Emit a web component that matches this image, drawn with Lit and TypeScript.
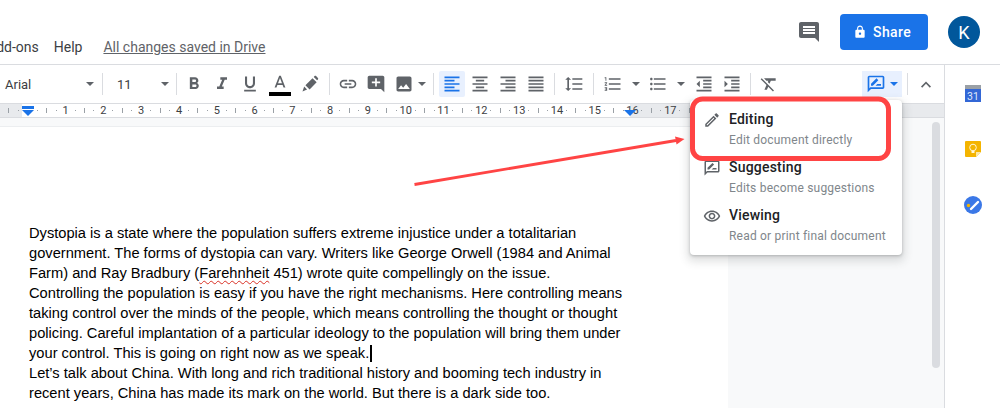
import { LitElement, html, css, svg } from 'lit';
import { customElement } from 'lit/decorators.js';

const ICONS: Record<string, string> = {
    comment: 'M21.99 4c0-1.1-.89-2-1.99-2H4c-1.1 0-2 .9-2 2v12c0 1.1.9 2 2 2h14l4 4-.01-18zM18 14H6v-2h12v2zm0-3H6V9h12v2zm0-3H6V6h12v2z',
    lock: 'M18 8h-1V6c0-2.76-2.24-5-5-5S7 3.24 7 6v2H6c-1.1 0-2 .9-2 2v10c0 1.1.9 2 2 2h12c1.1 0 2-.9 2-2V10c0-1.1-.9-2-2-2zm-6 9c-1.1 0-2-.9-2-2s.9-2 2-2 2 .9 2 2-.9 2-2 2zm3.1-9H8.9V6c0-1.71 1.39-3.1 3.1-3.1 1.71 0 3.1 1.39 3.1 3.1v2z',
    bold: 'M15.6 10.79c.97-.67 1.65-1.77 1.65-2.79 0-2.26-1.75-4-4-4H7v14h7.04c2.09 0 3.71-1.7 3.71-3.79 0-1.52-.86-2.82-2.15-3.42zM10 6.5h3c.83 0 1.5.67 1.5 1.5s-.67 1.5-1.5 1.5h-3v-3zm3.5 9H10v-3h3.5c.83 0 1.5.67 1.5 1.5s-.67 1.5-1.5 1.5z',
    italic: 'M10 4v3h2.21l-3.42 8H6v3h8v-3h-2.21l3.42-8H18V4z',
    underline: 'M12 17c3.31 0 6-2.69 6-6V3h-2.5v8c0 1.93-1.57 3.5-3.5 3.5S8.5 12.93 8.5 11V3H6v8c0 3.31 2.69 6 6 6zm-7 2v2h14v-2H5z',
    textColor: 'M11 1L5.5 15h2.25l1.12-3h6.25l1.12 3h2.25L13 1h-2zm-1.38 9L12 3.67 14.38 10H9.62z',
    marker: 'M3 21l2-6 3.5 3.5L3 21zM6.5 13.5L15 5l5 5-8.5 8.5-5-5zM16.5 3.5l1-1c.5-.5 1.3-.5 1.8 0l2.2 2.2c.5.5.5 1.3 0 1.8l-1 1-4-4z',
    link: 'M3.9 12c0-1.71 1.39-3.1 3.1-3.1h4V7H7c-2.76 0-5 2.24-5 5s2.24 5 5 5h4v-1.9H7c-1.71 0-3.1-1.39-3.1-3.1zM8 13h8v-2H8v2zm9-6h-4v1.9h4c1.71 0 3.1 1.39 3.1 3.1s-1.39 3.1-3.1 3.1h-4V17h4c2.76 0 5-2.24 5-5s-2.24-5-5-5z',
    addComment: 'M21.99 4c0-1.1-.89-2-1.99-2H4c-1.1 0-2 .9-2 2v12c0 1.1.9 2 2 2h14l4 4-.01-18zM17 11h-4v4h-2v-4H7V9h4V5h2v4h4v2z',
    image: 'M21 19V5c0-1.1-.9-2-2-2H5c-1.1 0-2 .9-2 2v14c0 1.1.9 2 2 2h14c1.1 0 2-.9 2-2zM8.5 13.5l2.5 3.01L14.5 12l4.5 6H5l3.5-4.5z',
    alignLeft: 'M15 15H3v2h12v-2zm0-8H3v2h12V7zM3 13h18v-2H3v2zm0 8h18v-2H3v2zM3 3v2h18V3H3z',
    alignCenter: 'M7 15v2h10v-2H7zm-4 6h18v-2H3v2zm0-8h18v-2H3v2zm4-6v2h10V7H7zM3 3v2h18V3H3z',
    alignRight: 'M3 21h18v-2H3v2zm6-4h12v-2H9v2zm-6-4h18v-2H3v2zm6-4h12V7H9v2zM3 3v2h18V3H3z',
    justify: 'M3 21h18v-2H3v2zm0-4h18v-2H3v2zm0-4h18v-2H3v2zm0-4h18V7H3v2zm0-6v2h18V3H3z',
    lineSpacing: 'M6 7h2.5L5 3.5 1.5 7H4v10H1.5L5 20.5 8.5 17H6V7zm4-2v2h12V5H10zm0 14h12v-2H10v2zm0-6h12v-2H10v2z',
    numbered: 'M2 17h2v.5H3v1h1v.5H2v1h3v-4H2v1zm1-9h1V4H2v1h1v3zm-1 3h1.8L2 13.1v.9h3v-1H3.2L5 10.9V10H2v1zm5-6v2h14V5H7zm0 14h14v-2H7v2zm0-6h14v-2H7v2z',
    bullets: 'M4 10.5c-.83 0-1.5.67-1.5 1.5s.67 1.5 1.5 1.5 1.5-.67 1.5-1.5-.67-1.5-1.5-1.5zm0-6c-.83 0-1.5.67-1.5 1.5S3.17 7.5 4 7.5 5.5 6.83 5.5 6 4.83 4.5 4 4.5zm0 12c-.83 0-1.5.68-1.5 1.5s.68 1.5 1.5 1.5 1.5-.68 1.5-1.5-.67-1.5-1.5-1.5zM7 19h14v-2H7v2zm0-6h14v-2H7v2zm0-8v2h14V5H7z',
    indentLess: 'M11 17h10v-2H11v2zm-8-5l4 4V8l-4 4zm0 9h18v-2H3v2zM3 3v2h18V3H3zm8 6h10V7H11v2zm0 4h10v-2H11v2z',
    indentMore: 'M3 21h18v-2H3v2zM3 8v8l4-4-4-4zm8 9h10v-2H11v2zM3 3v2h18V3H3zm8 6h10V7H11v2zm0 4h10v-2H11v2z',
    clear: 'M3.27 5L2 6.27l6.97 6.97L6.5 19h3l1.57-3.66L16.73 21 18 19.73 3.55 5.27 3.27 5zM6 5v.18L8.82 8h2.4l-.72 1.68 2.1 2.1L14.21 8H20V5H6z',
    mode: 'M20 2H4c-1.1 0-2 .9-2 2v18l4-4h14c1.1 0 2-.9 2-2V4c0-1.1-.9-2-2-2zm0 14H5.17L4 17.17V4h16v12zM6 14h2.2l6.6-6.6-2.2-2.2L6 11.8V14zm5.5 0H18v-2h-4.5l-2 2z',
    up: 'M7.41 16.41L12 11.83l4.59 4.58L18 15l-6-6-6 6z',
    pencil: 'M14.06 9.02l.92.92L5.92 19H5v-.92l9.06-9.06M17.66 3c-.25 0-.51.1-.7.29l-1.83 1.83 3.75 3.75 1.83-1.83c.39-.39.39-1.02 0-1.41l-2.34-2.34c-.2-.2-.45-.29-.71-.29zm-3.6 3.19L3 17.25V21h3.75L17.81 9.94l-3.75-3.75z',
    eye: 'M12 6.5c3.79 0 7.17 2.13 8.82 5.5-1.65 3.37-5.02 5.5-8.82 5.5S4.83 15.37 3.18 12C4.83 8.63 8.21 6.5 12 6.5m0-2C7 4.5 2.73 7.61 1 12c1.73 4.39 6 7.5 11 7.5s9.27-3.11 11-7.5c-1.73-4.39-6-7.5-11-7.5zm0 5c1.38 0 2.5 1.12 2.5 2.5s-1.12 2.5-2.5 2.5-2.5-1.12-2.5-2.5 1.12-2.5 2.5-2.5m0-2c-2.48 0-4.5 2.02-4.5 4.5s2.02 4.5 4.5 4.5 4.5-2.02 4.5-4.5-2.02-4.5-4.5-4.5z',
};

const icon = (name: string, size = 20) => html`
    <svg class="icon" width=${size} height=${size} viewBox="0 0 24 24" fill="currentColor"><path d=${ICONS[name]}></path></svg>
`;

const MENU_ITEMS = [
    { icon: 'pencil', title: 'Editing', desc: 'Edit document directly' },
    { icon: 'mode', title: 'Suggesting', desc: 'Edits become suggestions' },
    { icon: 'eye', title: 'Viewing', desc: 'Read or print final document' },
];

const LINES = [
    html`Dystopia is a state where the population suffers extreme injustice under a totalitarian`,
    html`government. The forms of dystopia can vary. Writers like George Orwell (1984 and Animal`,
    html`Farm) and Ray Bradbury (<span class="misspelled">Farehnheit</span> 451) wrote quite compellingly on the issue.`,
    html`Controlling the population is easy if you have the right mechanisms. Here controlling means`,
    html`taking control over the minds of the people, which means controlling the thought or thought`,
    html`policing. Careful implantation of a particular ideology to the population will bring them under`,
    html`your control. This is going on right now as we speak.<span class="caret"></span>`,
    html`Let’s talk about China. With long and rich traditional history and booming tech industry in`,
    html`recent years, China has made its mark on the world. But there is a dark side too.`,
];

@customElement('app-root')
export class AppRoot extends LitElement {
    static styles = css`
        :host {
            display: block;
            position: relative;
            width: 1000px;
            height: 408px;
            overflow: hidden;
            background: white;
            font-family: Roboto, 'Liberation Sans', sans-serif;
            color: #202124;
        }
        .icon {
            display: block;
            flex: none;
        }
        .header {
            display: flex;
            align-items: flex-start;
            height: 64px;
            border-bottom: 1px solid #dadce0;
        }
        .menus {
            display: flex;
            align-items: baseline;
            margin: 39px 0 0 -13px;
            font-size: 14px;
            line-height: 16px;
            color: #3c4043;
        }
        .menus .help {
            margin-left: 15px;
        }
        .menus .saved {
            margin-left: 21px;
            color: #5f6368;
            text-decoration: underline;
        }
        .header-right {
            display: flex;
            align-items: center;
            margin: 14px 20px 0 auto;
        }
        .comments {
            color: #5f6368;
            margin-right: 19px;
        }
        .share {
            display: flex;
            align-items: center;
            gap: 6px;
            width: 88px;
            height: 36px;
            padding-left: 13px;
            box-sizing: border-box;
            border-radius: 4px;
            background: #1a73e8;
            color: white;
            font-size: 14px;
            font-weight: 500;
            letter-spacing: 0.4px;
        }
        .avatar {
            display: flex;
            align-items: center;
            justify-content: center;
            width: 32px;
            height: 32px;
            margin-left: 20px;
            border-radius: 50%;
            background: #01579b;
            color: white;
            font-size: 18px;
        }
        .body {
            display: flex;
            height: 343px;
        }
        .work {
            display: flex;
            flex-direction: column;
            width: 944px;
            flex: none;
        }
        .toolbar {
            display: flex;
            align-items: center;
            flex: none;
            height: 38px;
            color: #5f6368;
        }
        .select {
            display: flex;
            align-items: center;
            justify-content: space-between;
            height: 26px;
            box-sizing: border-box;
            font-size: 13px;
            color: #3c4043;
        }
        .select.font {
            width: 102px;
            padding: 0 8px 0 5px;
        }
        .select.size {
            width: 73px;
            padding: 0 7px 0 14px;
        }
        .arrow {
            width: 0;
            height: 0;
            border-left: 4px solid transparent;
            border-right: 4px solid transparent;
            border-top: 4px solid #5f6368;
        }
        .sep {
            width: 1px;
            height: 22px;
            background: #dadce0;
            flex: none;
        }
        .sp1 { width: 1px; flex: none; }
        .sp3 { width: 3px; flex: none; }
        .sp4 { width: 4px; flex: none; }
        .sp5 { width: 5px; flex: none; }
        .sp8 { width: 8px; flex: none; }
        .btn {
            display: flex;
            align-items: center;
            justify-content: center;
            width: 28px;
            height: 26px;
            flex: none;
            border-radius: 2px;
        }
        .btn.on {
            width: 26px;
            margin: 0 1px;
            background: #e8f0fe;
            color: #1a73e8;
        }
        .caret-btn {
            display: flex;
            align-items: center;
            justify-content: center;
            width: 17px;
            height: 26px;
            flex: none;
        }
        .caret-btn.narrow {
            width: 7px;
        }
        .color-a {
            display: flex;
            flex-direction: column;
            align-items: center;
            width: 30px;
            height: 26px;
            padding-top: 4px;
            box-sizing: border-box;
            flex: none;
        }
        .color-a .bar {
            width: 22px;
            height: 4px;
            margin-top: -3px;
            background: black;
        }
        .mode-btn {
            display: flex;
            align-items: center;
            gap: 4px;
            width: 40px;
            height: 26px;
            margin-left: auto;
            padding-left: 4px;
            box-sizing: border-box;
            background: #e8f0fe;
            color: #1a73e8;
        }
        .mode-btn .arrow {
            border-top-color: #1a73e8;
        }
        .ruler {
            display: flex;
            flex: none;
            height: 13px;
            border-top: 1px solid #dadce0;
            border-bottom: 1px solid #dadce0;
            background: linear-gradient(to right, #e8eaed 22px, white 22px, white 630px, #e8eaed 630px);
            overflow: hidden;
            position: relative;
            color: #3c4043;
        }
        .ticks {
            display: flex;
            margin-left: 4.2px;
        }
        .seg {
            display: grid;
            grid-template-columns: repeat(4, 9.45px);
            align-items: center;
            justify-items: center;
            width: 37.8px;
            flex: none;
            font-size: 11px;
            line-height: 13px;
        }
        .seg .tick {
            width: 1px;
            height: 5px;
            background: #9aa0a6;
        }
        .seg .dot {
            width: 1px;
            height: 1px;
            background: #9aa0a6;
        }
        .marker {
            position: absolute;
            top: 2px;
            fill: #1a73e8;
        }
        .marker.start {
            left: 22px;
        }
        .marker.end {
            left: 624px;
        }
        .canvas {
            display: flex;
            flex: 1;
            background: #f8f9fa;
            min-height: 0;
        }
        .page {
            width: 728px;
            margin-top: 8px;
            padding: 96px 0 0 29px;
            box-sizing: border-box;
            background: white;
            border-top: 1px solid #eceef0;
            font-family: 'Liberation Sans', Arial, sans-serif;
            font-size: 14.67px;
            line-height: 20px;
            color: #000;
            white-space: nowrap;
        }
        .misspelled {
            text-decoration: underline wavy #d93025 1px;
            text-underline-offset: 2px;
        }
        .caret {
            display: inline-block;
            width: 2px;
            height: 17px;
            margin-left: 1px;
            vertical-align: -4px;
            background: black;
        }
        .scroll {
            width: 8px;
            height: 246px;
            margin: 4px 4px 0 auto;
            border-radius: 4px;
            background: #dadce0;
        }
        .side {
            display: flex;
            flex-direction: column;
            align-items: center;
            flex: 1;
            gap: 39px;
            padding-top: 20px;
            border-left: 1px solid #dadce0;
        }
        .menu {
            position: absolute;
            left: 690px;
            top: 100px;
            width: 212px;
            height: 155px;
            background: white;
            border-radius: 4px;
            box-shadow: 0 1px 3px rgba(60, 64, 67, 0.3), 0 4px 8px 3px rgba(60, 64, 67, 0.15);
        }
        .item {
            display: flex;
            height: 48px;
            padding: 10px 0 0 13px;
            box-sizing: border-box;
            color: #5f6368;
        }
        .item .icon {
            margin-top: 1px;
        }
        .item .text {
            margin-left: 8px;
        }
        .item .title {
            font-size: 14px;
            line-height: 18px;
            font-weight: 500;
            color: #202124;
            letter-spacing: 0.2px;
        }
        .item .desc {
            margin-top: 4px;
            font-size: 12px;
            line-height: 16px;
            color: #80868b;
            letter-spacing: 0.2px;
        }
        .annotation {
            position: absolute;
            left: 0;
            top: 0;
            pointer-events: none;
        }
    `;

    private renderSeg(i: number) {
        return html`
            <div class="seg">
                <div class="tick"></div>
                <div class="dot"></div>
                <div>${i > 0 ? i : ''}</div>
                <div class="dot"></div>
            </div>
        `;
    }

    private renderToolbar() {
        const btn = (name: string, on = false) => html`<div class="btn ${on ? 'on' : ''}">${icon(name)}</div>`;
        const arrow = html`<div class="caret-btn"><div class="arrow"></div></div>`;
        return html`
            <div class="toolbar">
                <div class="select font"><span>Arial</span><div class="arrow"></div></div>
                <div class="sep"></div>
                <div class="select size"><span>11</span><div class="arrow"></div></div>
                <div class="sep"></div>
                <div class="sp3"></div>
                ${btn('bold')}${btn('italic')}${btn('underline')}
                <div class="sp1"></div>
                <div class="color-a">${icon('textColor')}<div class="bar"></div></div>
                <div class="sp1"></div>
                ${btn('marker')}
                <div class="sp5"></div>
                <div class="sep"></div>
                <div class="sp4"></div>
                ${btn('link')}${btn('addComment')}${btn('image')}
                <div class="caret-btn narrow"><div class="arrow"></div></div>
                <div class="sp8"></div>
                <div class="sep"></div>
                <div class="sp4"></div>
                ${btn('alignLeft', true)}${btn('alignCenter')}${btn('alignRight')}${btn('justify')}
                <div class="sp4"></div>
                <div class="sep"></div>
                <div class="sp5"></div>
                ${btn('lineSpacing')}
                <div class="sp5"></div>
                <div class="sep"></div>
                <div class="sp5"></div>
                ${btn('numbered')}${arrow}
                ${btn('bullets')}${arrow}
                <div class="sp1"></div>
                ${btn('indentLess')}${btn('indentMore')}
                <div class="sp4"></div>
                <div class="sep"></div>
                <div class="sp4"></div>
                ${btn('clear')}
                <div class="mode-btn">${icon('mode')}<div class="arrow"></div></div>
                <div class="sp5"></div>
                <div class="sep"></div>
                <div class="sp4"></div>
                ${btn('up')}
                <div class="sp4"></div>
            </div>
        `;
    }

    render() {
        const segs = Array.from({ length: 19 }, (_, i) => i);
        return html`
            <div class="header">
                <div class="menus">
                    <span>Add-ons</span>
                    <span class="help">Help</span>
                    <span class="saved">All changes saved in Drive</span>
                </div>
                <div class="header-right">
                    <div class="comments">${icon('comment', 24)}</div>
                    <div class="share">${icon('lock', 14)}<span>Share</span></div>
                    <div class="avatar">K</div>
                </div>
            </div>
            <div class="body">
                <div class="work">
                    ${this.renderToolbar()}
                    <div class="ruler">
                        <div class="ticks">${segs.map((i) => this.renderSeg(i))}</div>
                        <svg class="marker start" width="12" height="12" viewBox="0 0 12 12">
                            <rect width="12" height="3"></rect>
                            <path d="M0 4h12l-6 6z"></path>
                        </svg>
                        <svg class="marker end" width="12" height="12" viewBox="0 0 12 12">
                            <path d="M0 4h12l-6 6z"></path>
                        </svg>
                    </div>
                    <div class="canvas">
                        <div class="page">${LINES.map((l) => html`<div>${l}</div>`)}</div>
                        <div class="scroll"></div>
                    </div>
                </div>
                <div class="side">
                    <svg width="16" height="17" viewBox="0 0 16 17">
                        <rect width="16" height="5" fill="#9aa0a6"></rect>
                        <rect width="16" height="13" y="4" fill="#3367d6"></rect>
                        <text x="8" y="14.5" font-size="10.5" text-anchor="middle" fill="#dfe8fb" font-family="Roboto">31</text>
                    </svg>
                    <svg width="16" height="16" viewBox="0 0 16 16">
                        <path d="M1 0h14a1 1 0 0 1 1 1v10l-5 5H1a1 1 0 0 1-1-1V1a1 1 0 0 1 1-1z" fill="#f4b400"></path>
                        <path d="M11 16v-5h5z" fill="#fbe7a6"></path>
                        <circle cx="8" cy="6.5" r="3.3" fill="none" stroke="#fff6d8" stroke-width="1"></circle>
                        <path d="M6.5 10h3v2h-3z" fill="#fff6d8"></path>
                    </svg>
                    <svg width="18" height="18" viewBox="0 0 18 18">
                        <circle cx="9" cy="9" r="9" fill="#3b78e7"></circle>
                        <circle cx="4.5" cy="9.5" r="1.7" fill="#f4b400"></circle>
                        <path d="M7 13l7-7" stroke="white" stroke-width="2.4" stroke-linecap="round"></path>
                    </svg>
                </div>
            </div>
            <div class="menu">
                ${MENU_ITEMS.map((m) => html`
                    <div class="item">
                        ${icon(m.icon, 18)}
                        <div class="text">
                            <div class="title">${m.title}</div>
                            <div class="desc">${m.desc}</div>
                        </div>
                    </div>
                `)}
            </div>
            <svg class="annotation" width="1000" height="408" viewBox="0 0 1000 408">
                ${svg`
                    <rect x="692.5" y="99" width="196" height="59.5" rx="10" fill="none" stroke="#ff4444" stroke-width="5"></rect>
                    <path d="M414.5 184.5L676 140.5" stroke="#ff4444" stroke-width="2.8" fill="none"></path>
                    <path d="M684.5 139L675 136.5l1.5 8z" fill="#ff4444"></path>
                `}
            </svg>
        `;
    }
}
